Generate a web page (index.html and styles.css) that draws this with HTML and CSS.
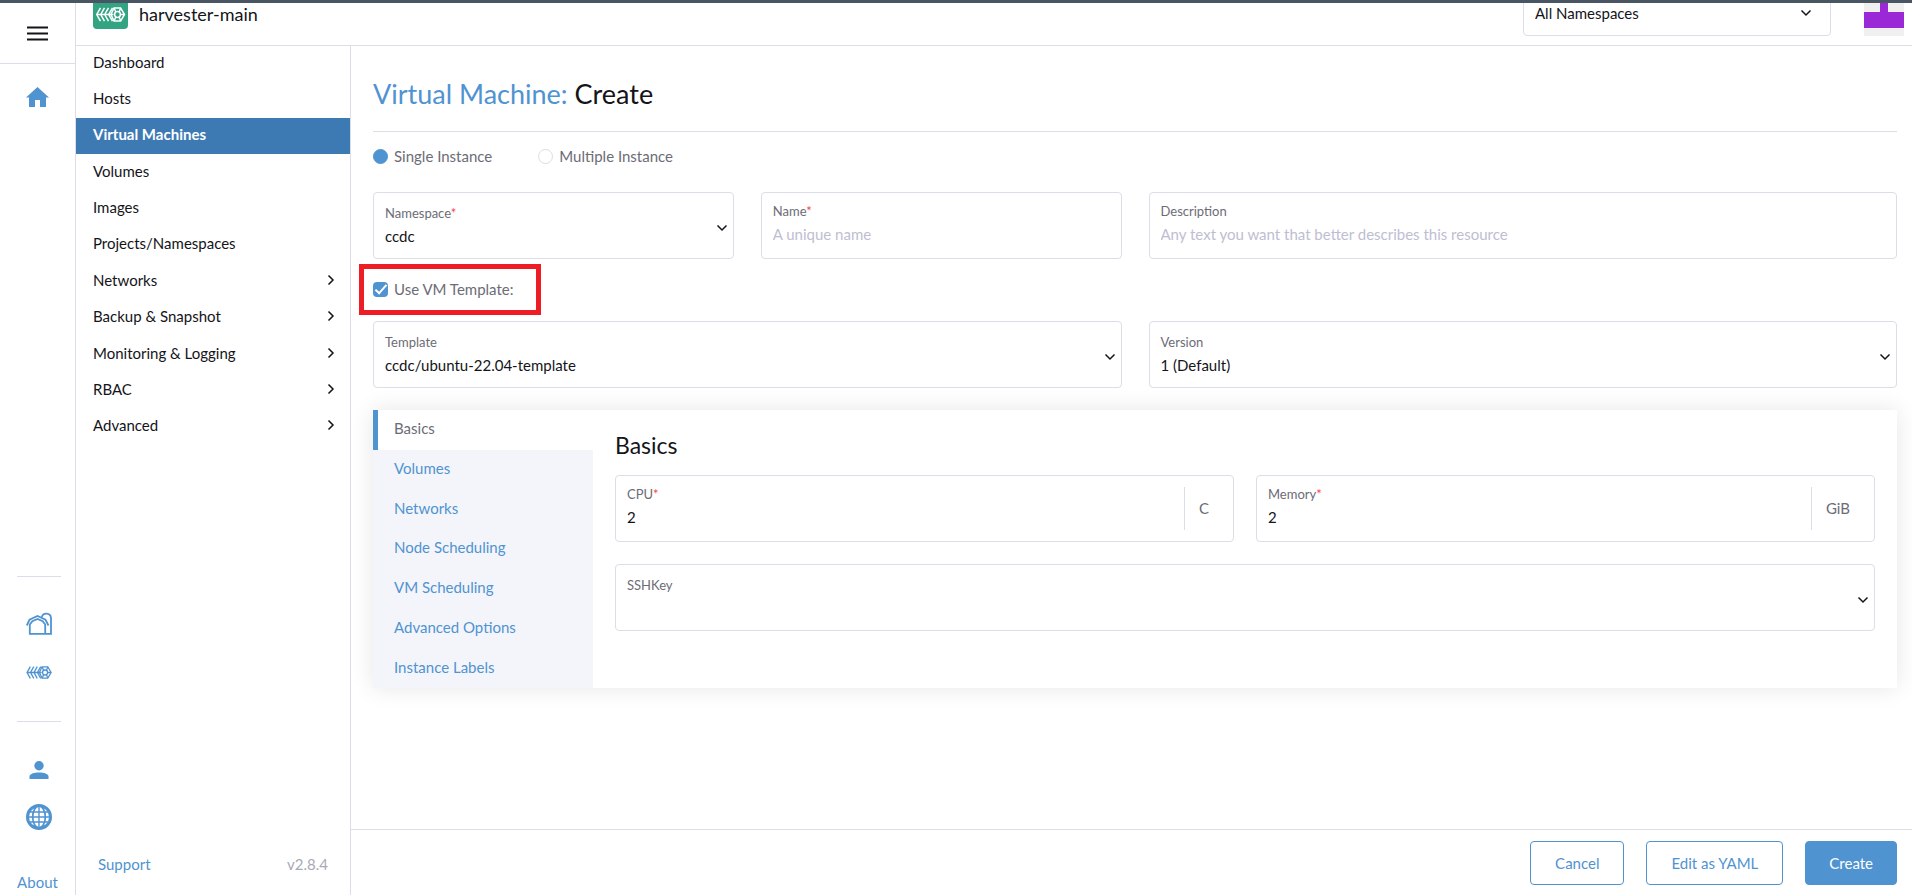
FILE: index.html
```html
<!DOCTYPE html>
<html lang="en">
<head>
<meta charset="utf-8">
<title>Virtual Machine: Create</title>
<link rel="stylesheet" href="styles.css">
</head>
<body>
<svg class="defs" width="0" height="0" aria-hidden="true">
  <symbol id="chevron-down" viewBox="0 0 12 8"><path d="M1.500 1.500L6 6l4.500-4.500" fill="none" stroke="currentColor" stroke-width="1.500"/></symbol>
  <symbol id="chevron-right" viewBox="0 0 8 12"><path d="M1.500 1.500L6 6l-4.500 4.500" fill="none" stroke="currentColor" stroke-width="1.500"/></symbol>
  <symbol id="harvester" viewBox="0 0 30 15">
    <g fill="none" stroke="currentColor" stroke-width="1.500">
      <path d="M5 .8L1.200 7.500 5 14.200M9 .8L5.200 7.500 9 14.200M13 .8L9.200 7.500l3.800 6.700M17 .8l-3.800 6.700 3.800 6.700M1 7.500h17"/>
      <path d="M18.500 .9h6.600L29 7.500l-3.900 6.600h-6.600L15.500 7.500z"/>
      <circle cx="22" cy="7.500" r="2.900"/>
      <path d="M20.400 5L18.500 1M23.600 5L25.200 1M20.400 10L18.500 14M23.600 10l1.600 4M25 7.500h4"/>
    </g>
  </symbol>
</svg>
<div class="topline"></div>
<div class="app">
  <aside class="rail">
    <button class="menu" type="button" aria-label="Menu">
      <svg width="21" height="15" viewBox="0 0 21 15"><path d="M0 1.500h21M0 7.500h21M0 13.500h21" stroke="currentColor" stroke-width="2.200"/></svg>
    </button>
    <a class="home" href="#" aria-label="Home">
      <svg width="23" height="20" viewBox="0 0 23 20"><path d="M11.500 0L23 10.500h-3V20h-6v-7H9v7H3v-9.500H0z" fill="currentColor"/></svg>
    </a>
    <div class="rail-apps">
      <a href="#" aria-label="Cluster management">
        <svg width="26" height="23" viewBox="0 0 26 23"><g fill="none" stroke="currentColor" stroke-width="1.800"><path d="M.8 13.500L3.500 7.800 11.500 4l8 3.800 3 5.700"/><path d="M3.800 22V12.500l2.500-3.300 5.200-2.300 5.200 2.300 2.500 3.300V22"/><path d="M3 21.800h22V5.800a4.700 4.700 0 0 0-9.200-.6"/></g></svg>
      </a>
      <a href="#" aria-label="Virtualization management"><svg width="26" height="13"><use href="#harvester"/></svg></a>
    </div>
    <div class="rail-user">
      <a href="#" aria-label="Users"><svg width="20" height="18" viewBox="0 0 19 18"><circle cx="9.500" cy="4.700" r="4.700" fill="currentColor"/><path d="M0 18v-2.500c0-2.500 4.500-4 9.500-4s9.500 1.500 9.500 4V18z" fill="currentColor"/></svg></a>
      <a href="#" aria-label="Global settings"><svg width="26" height="26" viewBox="0 0 26 26"><circle cx="13" cy="13" r="11.500" fill="none" stroke="currentColor" stroke-width="3"/><path d="M13 2v22M2 13h22M4 8h18M4 18h18" fill="none" stroke="currentColor" stroke-width="1.400"/><ellipse cx="13" cy="13" rx="6.300" ry="11" fill="none" stroke="currentColor" stroke-width="1.700"/></svg></a>
    </div>
    <a class="about" href="#">About</a>
  </aside>

  <div class="shell">
    <header class="header">
      <span class="logo"><svg width="31" height="15"><use href="#harvester"/></svg></span>
      <span class="cluster">harvester-main</span>
      <div class="ns-filter">
        <select aria-label="Namespace filter"><option>All Namespaces</option></select>
        <svg class="chev" width="12" height="8"><use href="#chevron-down"/></svg>
      </div>
      <svg class="avatar" width="40" height="40" viewBox="0 0 5 5" shape-rendering="crispEdges"><path fill="#f0f0f0" d="M0 0h5v5H0z"/><path fill="#9b28d6" d="M2 0h1v2h2v2H0V2h2z"/></svg>
    </header>
    <div class="body">
      <nav class="side">
        <div class="side-list">
          <a href="#">Dashboard</a>
          <a href="#">Hosts</a>
          <a class="active" href="#">Virtual Machines</a>
          <a href="#">Volumes</a>
          <a href="#">Images</a>
          <a href="#">Projects/Namespaces</a>
          <a href="#">Networks<svg width="8" height="12"><use href="#chevron-right"/></svg></a>
          <a href="#">Backup &amp; Snapshot<svg width="8" height="12"><use href="#chevron-right"/></svg></a>
          <a href="#">Monitoring &amp; Logging<svg width="8" height="12"><use href="#chevron-right"/></svg></a>
          <a href="#">RBAC<svg width="8" height="12"><use href="#chevron-right"/></svg></a>
          <a href="#">Advanced<svg width="8" height="12"><use href="#chevron-right"/></svg></a>
        </div>
        <div class="side-foot"><a href="#">Support</a><span>v2.8.4</span></div>
      </nav>
      <form class="main">
        <div class="content">
          <h1 class="title"><a href="#">Virtual Machine:</a> Create</h1>
          <div class="radios">
            <label><input type="radio" name="count" checked>Single Instance</label>
            <label><input type="radio" name="count">Multiple Instance</label>
          </div>
          <div class="grid">
            <div class="field pick">
              <label for="namespace">Namespace<i>*</i></label>
              <select id="namespace"><option>ccdc</option></select>
              <svg class="chev" width="12" height="8"><use href="#chevron-down"/></svg>
            </div>
            <div class="field">
              <label for="name">Name<i>*</i></label>
              <input id="name" type="text" placeholder="A unique name">
            </div>
            <div class="field wide">
              <label for="description">Description</label>
              <input id="description" type="text" placeholder="Any text you want that better describes this resource">
            </div>
          </div>
          <div class="use-template">
            <label><input type="checkbox" checked>Use VM Template:</label>
            <span class="highlight"></span>
          </div>
          <div class="grid">
            <div class="field pick wide">
              <label for="template">Template</label>
              <select id="template"><option>ccdc/ubuntu-22.04-template</option></select>
              <svg class="chev" width="12" height="8"><use href="#chevron-down"/></svg>
            </div>
            <div class="field pick wide">
              <label for="version">Version</label>
              <select id="version"><option>1 (Default)</option></select>
              <svg class="chev" width="12" height="8"><use href="#chevron-down"/></svg>
            </div>
          </div>
          <section class="tabbed">
            <div class="tabs">
              <a class="active" href="#">Basics</a>
              <a href="#">Volumes</a>
              <a href="#">Networks</a>
              <a href="#">Node Scheduling</a>
              <a href="#">VM Scheduling</a>
              <a href="#">Advanced Options</a>
              <a href="#">Instance Labels</a>
            </div>
            <div class="panel">
              <h2>Basics</h2>
              <div class="pair">
                <div class="field unit">
                  <div class="unit-main"><label for="cpu">CPU<i>*</i></label><input id="cpu" type="text" value="2"></div>
                  <span class="suffix">C</span>
                </div>
                <div class="field unit">
                  <div class="unit-main"><label for="memory">Memory<i>*</i></label><input id="memory" type="text" value="2"></div>
                  <span class="suffix">GiB</span>
                </div>
              </div>
              <div class="field pick">
                <label for="sshkey">SSHKey</label>
                <select id="sshkey"><option></option></select>
                <svg class="chev" width="12" height="8"><use href="#chevron-down"/></svg>
              </div>
            </div>
          </section>
        </div>
        <footer class="actions">
          <button type="button">Cancel</button>
          <button type="button">Edit as YAML</button>
          <button class="primary" type="submit">Create</button>
        </footer>
      </form>
    </div>
  </div>
</div>
</body>
</html>
```
FILE: styles.css
```css
:root {
  --text: #141419;
  --muted: #6c6c76;
  --primary: #5093d1;
  --border: #dcdee7;
}
* { box-sizing: border-box; }
body {
  margin: 0;
  height: 100vh;
  display: flex;
  flex-direction: column;
  font-family: Lato, "Liberation Sans", sans-serif;
  font-size: 15px;
  line-height: 20px;
  color: var(--text);
  background: #fff;
  overflow: hidden;
}
a { color: var(--primary); text-decoration: none; }
svg { display: block; flex: none; }
.defs { position: absolute; }
input, select, button { font: inherit; color: inherit; margin: 0; }
.topline { flex: none; height: 3px; background: #4a5564; }
.app { flex: 1; display: flex; min-height: 0; }

/* icon rail */
.rail {
  flex: none;
  width: 76px;
  border-right: 1px solid var(--border);
  display: flex;
  flex-direction: column;
  align-items: center;
}
.menu {
  width: 100%;
  height: 61px;
  padding: 0;
  border: 0;
  border-bottom: 1px solid var(--border);
  background: none;
  display: flex;
  align-items: center;
  justify-content: center;
}
.home { margin-top: 23px; }
.rail-apps, .rail-user {
  width: 44px;
  margin-left: 2px;
  border-top: 1px solid var(--border);
  display: flex;
  flex-direction: column;
  align-items: center;
}
.rail-apps { margin-top: auto; padding: 35px 0 42px; gap: 31px; }
.rail-user { padding: 39px 0 42px; gap: 25px; }
.about { padding-bottom: 3px; }

/* header */
.shell { flex: 1; min-width: 0; display: flex; flex-direction: column; }
.header {
  flex: none;
  height: 43px;
  padding: 0 8px 9px 17px;
  border-bottom: 1px solid var(--border);
  display: flex;
  align-items: flex-end;
  overflow: hidden;
}
.logo {
  width: 35px;
  height: 29px;
  margin-bottom: 7px;
  border-radius: 4px;
  background: #32a482;
  color: #fff;
  display: flex;
  align-items: center;
  justify-content: center;
}
.cluster { margin: 0 auto 11px 11px; font-size: 18px; line-height: 22px; }
.ns-filter {
  position: relative;
  width: 308px;
  height: 45px;
  margin-right: 33px;
  border: 1px solid var(--border);
  border-radius: 4px;
}
.ns-filter select {
  width: 100%;
  height: 100%;
  padding: 0 11px 1px;
  border: 0;
  background: none;
  appearance: none;
}
.ns-filter .chev { position: absolute; right: 18px; top: 17px; }

/* side navigation */
.body { flex: 1; min-height: 0; display: flex; }
.side {
  flex: none;
  width: 275px;
  border-right: 1px solid var(--border);
  display: flex;
  flex-direction: column;
  justify-content: space-between;
}
.side-list { height: 400px; margin-top: -1px; display: grid; grid-auto-rows: 1fr; }
.side-list a {
  display: flex;
  align-items: center;
  justify-content: space-between;
  padding: 0 15px 3px 17px;
  color: var(--text);
}
.side-list .active { background: #3d7ab3; color: #fff; font-weight: 700; }
.side-foot { display: flex; justify-content: space-between; padding: 0 22px 21px; color: #a8aab5; }

/* form */
.main { flex: 1; min-width: 0; display: flex; flex-direction: column; }
.content { flex: 1; padding: 31px 15px 0 22px; }
.title {
  margin: 0;
  padding-bottom: 20px;
  border-bottom: 1px solid var(--border);
  font-size: 27px;
  line-height: 34px;
  font-weight: 400;
}
.radios { display: flex; gap: 46px; padding: 14px 0 26px; color: var(--muted); }
.radios label, .use-template label { display: flex; align-items: center; gap: 6px; }
.radios input, .use-template input {
  appearance: none;
  width: 15px;
  height: 15px;
  border: 1px solid var(--border);
  border-radius: 50%;
}
.radios input:checked { background: var(--primary); border-color: var(--primary); }
.grid { display: grid; grid-template-columns: repeat(4, 1fr); gap: 27px; }
.wide { grid-column: span 2; }
.field {
  position: relative;
  min-width: 0;
  height: 67px;
  padding: 9px 11px;
  border: 1px solid var(--border);
  border-radius: 4px;
}
.field label { display: block; font-size: 13px; line-height: 18px; color: var(--muted); }
.field i { font-style: normal; color: #f64747; }
.field input, .field select {
  display: block;
  width: 100%;
  height: 24px;
  margin-top: 2px;
  padding: 0;
  border: 0;
  background: none;
  appearance: none;
  outline: 0;
}
.field input::placeholder { color: #bebed2; }
.pick { padding-top: 11px; }
.field .chev { position: absolute; right: 5px; top: 31px; }
.use-template { position: relative; padding: 20px 0 22px; color: var(--muted); }
.use-template input {
  border: 0;
  border-radius: 4px;
  background: var(--primary);
  display: grid;
  place-items: center;
}
.use-template input::after {
  content: "";
  width: 10px;
  height: 4px;
  margin-bottom: 2px;
  border: solid #fff;
  border-width: 0 0 2px 2px;
  transform: rotate(-48deg);
}
.highlight {
  position: absolute;
  left: -14px;
  top: 5px;
  width: 182px;
  height: 51px;
  border: 5px solid #ee1c25;
}

/* tabs */
.tabbed { display: flex; margin-top: 22px; box-shadow: 0 0 22px rgba(20, 20, 40, 0.1); background: #fff; }
.tabs {
  flex: none;
  width: 220px;
  height: 278px;
  display: grid;
  grid-auto-rows: 1fr;
  background: #f4f5fa;
}
.tabs a { display: flex; align-items: center; padding: 0 0 3px 16px; border-left: 5px solid transparent; }
.tabs .active { border-left-color: var(--primary); background: #fff; color: var(--muted); }
.panel { flex: 1; min-width: 0; padding: 21px 22px; }
.panel h2 { margin: 0 0 16px; font-size: 23px; line-height: 28px; font-weight: 400; }
.pair { display: grid; grid-template-columns: 1fr 1fr; gap: 22px; margin-bottom: 22px; }
.unit { display: flex; align-items: flex-start; padding: 9px 11px; }
.unit-main { flex: 1; }
.suffix {
  display: flex;
  align-items: center;
  height: 43px;
  margin-top: 2px;
  padding: 0 13px 2px 14px;
  border-left: 1px solid var(--border);
  color: var(--muted);
}

/* actions */
.actions {
  display: flex;
  justify-content: flex-end;
  gap: 22px;
  padding: 11px 15px 10px;
  border-top: 1px solid var(--border);
}
.actions button {
  height: 44px;
  padding: 0 24px 1px;
  border: 1px solid var(--primary);
  border-radius: 4px;
  background: #fff;
  color: var(--primary);
}
.actions .primary { padding: 0 23px; background: var(--primary); color: #fff; }
```
